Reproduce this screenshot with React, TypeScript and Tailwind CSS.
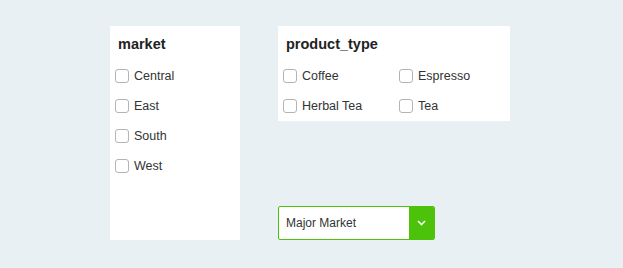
import React from "react";

function Check({ label, w }: { label: string; w?: string }) {
  return (
    <div className={`flex h-[30px] items-center ${w ?? ""}`}>
      <span className="ml-[5px] box-border h-[14px] w-[14px] rounded-[3px] border border-[#b4b4b4] bg-white" />
      <span className="ml-[5px] text-[12.5px] leading-none text-[#333]">{label}</span>
    </div>
  );
}

export default function App() {
  return (
    <div
      className="flex h-[268px] w-[623px] bg-[#e9f0f4] pl-[110px] pt-[26px]"
      style={{ fontFamily: '"Liberation Sans", Arial, sans-serif' }}
    >
      <div className="flex h-[214px] w-[130px] flex-col bg-white pt-[8px]">
        <div className="h-[20px] pl-[8px] text-[14.5px] font-bold leading-[20px] text-[#222]">market</div>
        <div className="mt-[7px] flex flex-col">
          <Check label="Central" />
          <Check label="East" />
          <Check label="South" />
          <Check label="West" />
        </div>
      </div>
      <div className="ml-[38px] flex h-[214px] w-[232px] flex-col justify-between">
        <div className="h-[95px] bg-white pt-[8px]">
          <div className="h-[20px] pl-[8px] text-[14.5px] font-bold leading-[20px] text-[#222]">product_type</div>
          <div className="mt-[7px] grid grid-cols-[116px_116px]">
            <Check label="Coffee" />
            <Check label="Espresso" />
            <Check label="Herbal Tea" />
            <Check label="Tea" />
          </div>
        </div>
        <div className="flex h-[34px] w-[157px] overflow-hidden rounded-[2px] border border-[#4cc20a] bg-white">
          <div className="flex flex-1 items-center pl-[7px] text-[12px] text-[#333]">Major Market</div>
          <div className="flex w-[25px] items-center justify-center bg-[#4cc20a]">
            <svg width="9" height="6" viewBox="0 0 9 6" fill="none">
              <path d="M1 1l3.5 3.5L8 1" stroke="white" strokeWidth="1.6" />
            </svg>
          </div>
        </div>
      </div>
    </div>
  );
}
